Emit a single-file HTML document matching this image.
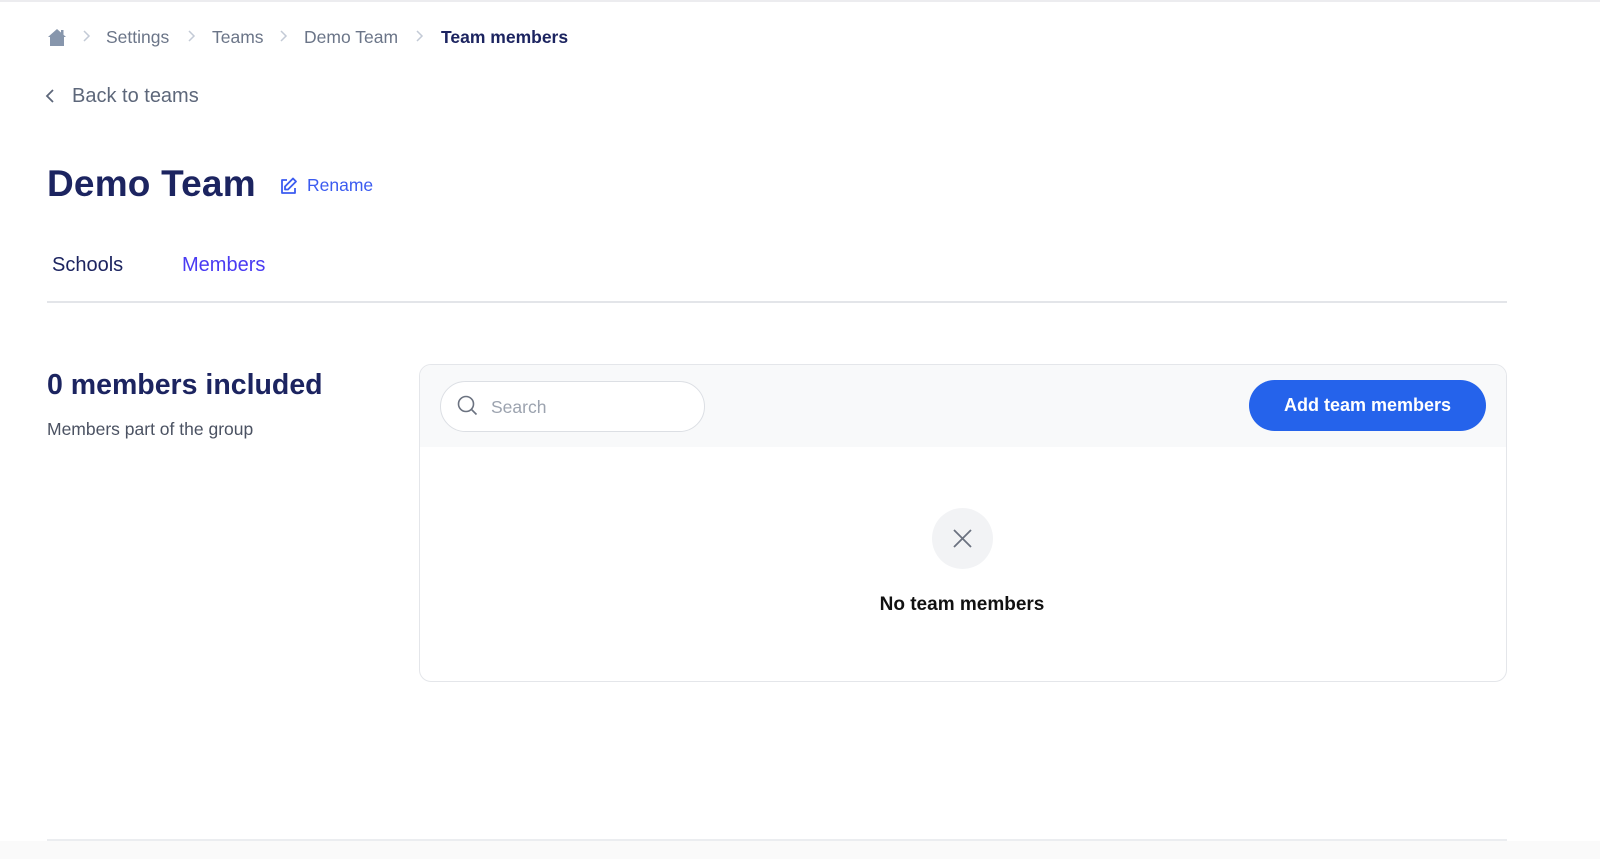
<!DOCTYPE html>
<html><head><meta charset="utf-8"><style>
*{margin:0;padding:0;box-sizing:border-box}
body{width:1600px;height:857px;background:#fff;font-family:"Liberation Sans",sans-serif;position:relative;overflow:hidden;border-top:2px solid #ececef}
.a{position:absolute;white-space:nowrap}
.bc{font-size:17.5px;color:#6b7588;top:25px}
.sep{top:27px;color:#c0c7d2}
</style></head><body>
<svg class="a" style="left:47px;top:26px" width="20" height="19" viewBox="0 0 20 19"><path d="M10 1 L19 9 L17 9 L17 18 L3 18 L3 9 L1 9 Z" fill="#8796ac"/><rect x="14" y="2" width="2.5" height="5" fill="#8796ac"/></svg>
<svg class="a sep" style="left:82px" width="10" height="14"><path d="M2 2l5 5-5 5" stroke="#c3cad6" stroke-width="1.5" fill="none"/></svg>
<div class="a bc" style="left:106px">Settings</div>
<svg class="a sep" style="left:187px" width="10" height="14"><path d="M2 2l5 5-5 5" stroke="#c3cad6" stroke-width="1.5" fill="none"/></svg>
<div class="a bc" style="left:212px">Teams</div>
<svg class="a sep" style="left:279px" width="10" height="14"><path d="M2 2l5 5-5 5" stroke="#c3cad6" stroke-width="1.5" fill="none"/></svg>
<div class="a bc" style="left:304px">Demo Team</div>
<svg class="a sep" style="left:415px" width="10" height="14"><path d="M2 2l5 5-5 5" stroke="#c3cad6" stroke-width="1.5" fill="none"/></svg>
<div class="a bc" style="left:441px;color:#1c2460;font-weight:bold">Team members</div>

<svg class="a" style="left:44px;top:86px" width="12" height="16"><path d="M9 2L3 8l6 6" stroke="#5d677a" stroke-width="1.8" fill="none"/></svg>
<div class="a" style="left:72px;top:83px;font-size:20px;color:#5d677a">Back to teams</div>

<div class="a" style="left:47px;top:161px;font-size:37px;font-weight:bold;color:#1c2460;letter-spacing:0.2px">Demo Team</div>
<svg class="a" style="left:279px;top:175px" width="19" height="19" viewBox="0 0 19 19"><path d="M8 3H3v13h13v-5" stroke="#3b5bf0" stroke-width="1.8" fill="none" stroke-linejoin="round"/><path d="M14 1.5l3 3-8 8H6v-3z" stroke="#3b5bf0" stroke-width="1.8" fill="none" stroke-linejoin="round"/></svg>
<div class="a" style="left:307px;top:173px;font-size:17.5px;color:#3b5bf0">Rename</div>

<div class="a" style="left:52px;top:252px;font-size:20px;color:#1c2460">Schools</div>
<div class="a" style="left:182px;top:252px;font-size:20px;color:#4a3bf2">Members</div>
<div class="a" style="left:47px;top:299px;width:1460px;height:2px;background:#e3e5e9"></div>

<div class="a" style="left:47px;top:367px;font-size:28.5px;font-weight:bold;color:#1c2460">0 members included</div>
<div class="a" style="left:47px;top:417px;font-size:17.5px;color:#4b5262">Members part of the group</div>

<div class="a" style="left:419px;top:362px;width:1088px;height:318px;border:1px solid #e4e6ea;border-radius:12px;overflow:hidden">
 <div style="height:82px;background:#f8f9fa"></div>
</div>
<div class="a" style="left:440px;top:379px;width:265px;height:51px;border:1px solid #dcdfe4;border-radius:26px;background:#fff"></div>
<svg class="a" style="left:457px;top:393px" width="22" height="22"><circle cx="9" cy="9" r="7.5" stroke="#6b7280" stroke-width="1.6" fill="none"/><path d="M14.5 14.5l5 5" stroke="#6b7280" stroke-width="1.6"/></svg>
<div class="a" style="left:491px;top:395px;font-size:17.5px;color:#9ca3af">Search</div>
<div class="a" style="left:1249px;top:378px;width:237px;height:51px;background:#2563eb;border-radius:26px;color:#fff;font-size:18px;font-weight:bold;text-align:center;line-height:51px">Add team members</div>

<div class="a" style="left:932px;top:506px;width:61px;height:61px;border-radius:50%;background:#f2f3f5"></div>
<svg class="a" style="left:952px;top:526px" width="21" height="21"><path d="M2 2l17 17M19 2L2 19" stroke="#6b7280" stroke-width="1.8"/></svg>
<div class="a" style="left:862px;top:592px;width:200px;text-align:center;font-size:19px;font-weight:bold;color:#111">No team members</div>

<div class="a" style="left:47px;top:837px;width:1460px;height:2px;background:#ebedf0"></div>
<div class="a" style="left:0;top:839px;width:1600px;height:18px;background:#fafafa"></div>
</body></html>
